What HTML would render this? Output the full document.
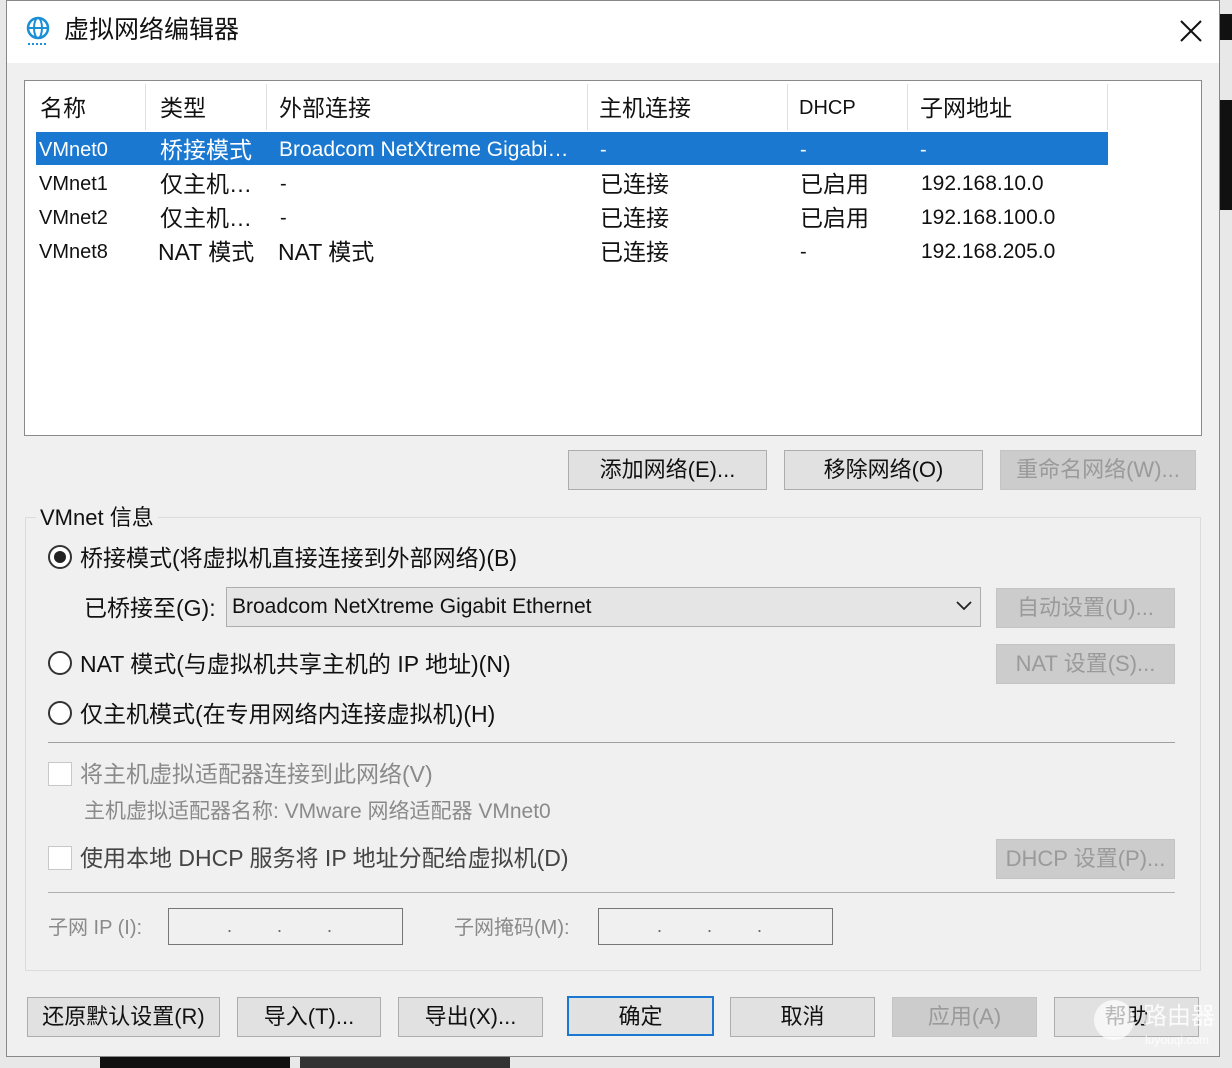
<!DOCTYPE html>
<html><head><meta charset="utf-8"><style>
*{box-sizing:border-box;margin:0;padding:0}
body{width:1232px;height:1068px;position:relative;overflow:hidden;background:#e8e8e8;font-family:"Liberation Sans","Noto Sans CJK SC",sans-serif;font-size:23px;color:#111}
.a{position:absolute;white-space:nowrap;line-height:28px}
.dlg{position:absolute;left:6px;top:0;width:1214px;height:1057px;background:#f0f0f0;border:1px solid #888}
.title{position:absolute;left:0;top:0;width:1212px;height:62px;background:#fff}
.btn{position:absolute;height:40px;background:#e1e1e1;border:1px solid #adadad;text-align:center;line-height:38px;font-size:22px}
.dis{color:#9a9a9a;background:#ccc;border-color:#c4c4c4}
.gray{color:#8a8a8a}
.radio{position:absolute;width:24px;height:24px;border:2px solid #333;border-radius:50%;background:#fff}
.chk{position:absolute;width:24px;height:24px;border:1px solid #c8c8c8;background:#fff}
.sep{position:absolute;height:1px;background:#a0a0a0}
</style></head><body>
<div class="a" style="left:1220px;top:14px;width:12px;height:26px;background:#111"></div>
<div class="a" style="left:1220px;top:100px;width:12px;height:110px;background:#111"></div>
<div class="a" style="left:100px;top:1057px;width:190px;height:11px;background:#111"></div>
<div class="a" style="left:300px;top:1057px;width:210px;height:11px;background:#333"></div>
<div class="dlg">
<div class="title">
<svg class="a" style="left:18px;top:14px" width="26" height="32" viewBox="0 0 26 32"><circle cx="13" cy="13" r="10" fill="none" stroke="#1a8fd6" stroke-width="2.5"/><ellipse cx="13" cy="13" rx="4" ry="10" fill="none" stroke="#1a8fd6" stroke-width="2"/><line x1="3" y1="13" x2="23" y2="13" stroke="#1a8fd6" stroke-width="2"/><line x1="3" y1="29" x2="23" y2="29" stroke="#1a8fd6" stroke-width="2" stroke-dasharray="2 2"/></svg>
<div class="a" style="left:57px;top:15px;font-size:25px">虚拟网络编辑器</div>
<svg class="a" style="left:1172px;top:18px" width="24" height="24"><path d="M2 2L22 22M22 2L2 22" stroke="#111" stroke-width="2"/></svg>
</div>
</div>
<!-- list -->
<div class="a" style="left:24px;top:80px;width:1178px;height:356px;background:#fff;border:1px solid #8a8a8a"></div>
<div class="a" style="left:36px;top:132px;width:1072px;height:33px;background:#1a78d0"></div>
<div class="a" style="left:145px;top:84px;width:1px;height:46px;background:#e0e0e0"></div>
<div class="a" style="left:266px;top:84px;width:1px;height:46px;background:#e0e0e0"></div>
<div class="a" style="left:587px;top:84px;width:1px;height:46px;background:#e0e0e0"></div>
<div class="a" style="left:787px;top:84px;width:1px;height:46px;background:#e0e0e0"></div>
<div class="a" style="left:907px;top:84px;width:1px;height:46px;background:#e0e0e0"></div>
<div class="a" style="left:1107px;top:84px;width:1px;height:46px;background:#e0e0e0"></div>
<div class="a" style="left:40px;top:94px">名称</div>
<div class="a" style="left:160px;top:94px">类型</div>
<div class="a" style="left:279px;top:94px">外部连接</div>
<div class="a" style="left:599px;top:94px">主机连接</div>
<div class="a" style="left:799px;top:94px;font-size:20px">DHCP</div>
<div class="a" style="left:920px;top:94px">子网地址</div>
<div style="color:#fff">
<div class="a" style="left:39px;top:136px;font-size:20px">VMnet0</div>
<div class="a" style="left:160px;top:136px">桥接模式</div>
<div class="a" style="left:279px;top:136px;font-size:21px">Broadcom NetXtreme Gigabi…</div>
<div class="a" style="left:600px;top:136px;font-size:20px">-</div>
<div class="a" style="left:800px;top:136px;font-size:20px">-</div>
<div class="a" style="left:920px;top:136px;font-size:20px">-</div>
</div>
<div class="a" style="left:39px;top:170px;font-size:20px">VMnet1</div>
<div class="a" style="left:160px;top:170px">仅主机…</div>
<div class="a" style="left:280px;top:170px;font-size:20px">-</div>
<div class="a" style="left:600px;top:170px">已连接</div>
<div class="a" style="left:800px;top:170px">已启用</div>
<div class="a" style="left:921px;top:170px;font-size:21px">192.168.10.0</div>
<div class="a" style="left:39px;top:204px;font-size:20px">VMnet2</div>
<div class="a" style="left:160px;top:204px">仅主机…</div>
<div class="a" style="left:280px;top:204px;font-size:20px">-</div>
<div class="a" style="left:600px;top:204px">已连接</div>
<div class="a" style="left:800px;top:204px">已启用</div>
<div class="a" style="left:921px;top:204px;font-size:21px">192.168.100.0</div>
<div class="a" style="left:39px;top:238px;font-size:20px">VMnet8</div>
<div class="a" style="left:158px;top:238px">NAT 模式</div>
<div class="a" style="left:278px;top:238px">NAT 模式</div>
<div class="a" style="left:600px;top:238px">已连接</div>
<div class="a" style="left:800px;top:238px;font-size:20px">-</div>
<div class="a" style="left:921px;top:238px;font-size:21px">192.168.205.0</div>
<div class="btn" style="left:568px;top:450px;width:199px">添加网络(E)...</div>
<div class="btn" style="left:784px;top:450px;width:199px">移除网络(O)</div>
<div class="btn dis" style="left:1000px;top:450px;width:196px">重命名网络(W)...</div>
<!-- group -->
<div class="a" style="left:25px;top:517px;width:1176px;height:454px;border:1px solid #dcdcdc"></div>
<div class="a" style="left:36px;top:504px;background:#f0f0f0;padding:0 4px;font-size:22px">VMnet 信息</div>
<div class="radio" style="left:48px;top:545px"><div style="position:absolute;left:4px;top:4px;width:12px;height:12px;border-radius:50%;background:#222"></div></div>
<div class="a" style="left:80px;top:544px">桥接模式(将虚拟机直接连接到外部网络)(B)</div>
<div class="a" style="left:84px;top:594px">已桥接至(G):</div>
<div class="a" style="left:226px;top:587px;width:755px;height:40px;background:#e5e5e5;border:1px solid #adadad"></div>
<div class="a" style="left:232px;top:593px;font-size:21px">Broadcom NetXtreme Gigabit Ethernet</div>
<svg class="a" style="left:955px;top:600px" width="18" height="12"><path d="M2 2L9 9L16 2" stroke="#222" stroke-width="1.8" fill="none"/></svg>
<div class="btn dis" style="left:996px;top:588px;width:179px">自动设置(U)...</div>
<div class="radio" style="left:48px;top:651px"></div>
<div class="a" style="left:80px;top:650px">NAT 模式(与虚拟机共享主机的 IP 地址)(N)</div>
<div class="btn dis" style="left:996px;top:644px;width:179px">NAT 设置(S)...</div>
<div class="radio" style="left:48px;top:701px"></div>
<div class="a" style="left:80px;top:700px">仅主机模式(在专用网络内连接虚拟机)(H)</div>
<div class="sep" style="left:48px;top:742px;width:1127px"></div>
<div class="chk" style="left:48px;top:762px"></div>
<div class="a gray" style="left:80px;top:760px">将主机虚拟适配器连接到此网络(V)</div>
<div class="a gray" style="left:84px;top:798px;font-size:21px">主机虚拟适配器名称: VMware 网络适配器 VMnet0</div>
<div class="chk" style="left:48px;top:846px"></div>
<div class="a" style="left:80px;top:844px;color:#444">使用本地 DHCP 服务将 IP 地址分配给虚拟机(D)</div>
<div class="btn dis" style="left:996px;top:839px;width:179px">DHCP 设置(P)...</div>
<div class="sep" style="left:48px;top:892px;width:1127px;background:#b0b0b0"></div>
<div class="a gray" style="left:48px;top:914px;font-size:20px">子网 IP (I):</div>
<div class="a" style="left:168px;top:908px;width:235px;height:37px;background:#f0f0f0;border:1px solid #777;color:#666;font-size:18px;padding-left:58px;line-height:34px">. &nbsp; &nbsp; &nbsp; &nbsp; . &nbsp; &nbsp; &nbsp; &nbsp; .</div>
<div class="a gray" style="left:454px;top:914px;font-size:20px">子网掩码(M):</div>
<div class="a" style="left:598px;top:908px;width:235px;height:37px;background:#f0f0f0;border:1px solid #777;color:#666;font-size:18px;padding-left:58px;line-height:34px">. &nbsp; &nbsp; &nbsp; &nbsp; . &nbsp; &nbsp; &nbsp; &nbsp; .</div>
<div class="btn" style="left:27px;top:997px;width:193px">还原默认设置(R)</div>
<div class="btn" style="left:237px;top:997px;width:144px">导入(T)...</div>
<div class="btn" style="left:398px;top:997px;width:145px">导出(X)...</div>
<div class="btn" style="left:567px;top:996px;width:147px;border:2px solid #1a78d0">确定</div>
<div class="btn" style="left:730px;top:997px;width:145px">取消</div>
<div class="btn dis" style="left:892px;top:997px;width:145px">应用(A)</div>
<div class="btn" style="left:1054px;top:997px;width:145px">帮助</div>
<div class="a" style="left:1094px;top:1000px;width:40px;height:40px;border-radius:50%;background:rgba(255,255,255,.7)"></div>
<div class="a" style="left:1143px;top:1003px;font-size:24px;color:rgba(255,255,255,.85)">路由器</div>
<div class="a" style="left:1145px;top:1033px;font-size:12px;line-height:14px;color:rgba(255,255,255,.9)">luyouqi.com</div>
</body></html>
